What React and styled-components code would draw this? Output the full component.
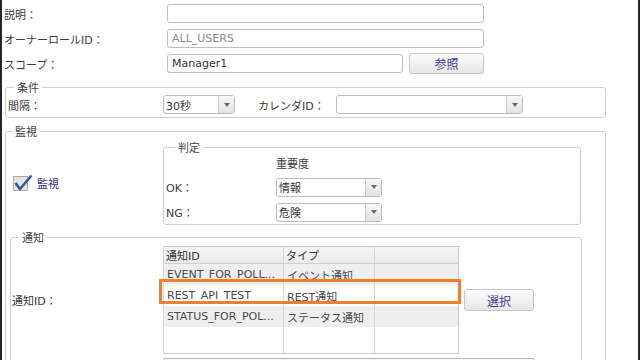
import React from 'react';
import styled, { createGlobalStyle } from 'styled-components';

const GlobalStyle = createGlobalStyle`
  html, body {
    margin: 0;
    padding: 0;
    background: #fff;
  }
  body {
    font-family: "DejaVu Sans", "Noto Sans CJK JP", sans-serif;
    font-size: 11px;
    color: #3a3a3a;
  }
`;

const Frame = styled.div`
  width: 640px;
  height: 360px;
  box-sizing: border-box;
  border-left: 2px solid #262626;
  border-right: 2px solid #262626;
  overflow: hidden;
  background: #fff;
`;

const TopForm = styled.div`
  display: flex;
  flex-direction: column;
  gap: 6px;
  padding: 4px 0 0 2px;
`;

const Row = styled.div`
  display: flex;
  align-items: center;
  height: ${p => p.$h || 19}px;
`;

const Label = styled.span`
  width: ${p => p.$w}px;
  flex-shrink: 0;
  white-space: nowrap;
  margin-left: ${p => p.$ml || 0}px;
`;

const TextBox = styled.div`
  width: ${p => p.$w}px;
  height: 19px;
  box-sizing: border-box;
  border: 1px solid #bcbcbc;
  border-radius: 3px;
  padding: 0 4px;
  display: flex;
  align-items: center;
  color: ${p => (p.$muted ? '#8a8a8a' : '#333')};
  background: #fff;
`;

const Button = styled.button`
  width: ${p => p.$w}px;
  height: ${p => p.$h || 21}px;
  margin-left: 6px;
  flex-shrink: 0;
  border: 1px solid #c6c6c6;
  border-radius: 3px;
  background: linear-gradient(#fdfdfd, #e6e6e6);
  color: #3b3b9c;
  font-family: "Noto Sans CJK JP", sans-serif;
  font-size: 12px;
  padding: 0;
`;

const SelectBox = styled.div`
  width: ${p => p.$w}px;
  height: ${p => p.$h || 19}px;
  box-sizing: border-box;
  border: 1px solid #bcbcbc;
  border-radius: 3px;
  display: flex;
  background: #fff;
  flex-shrink: 0;
`;

const SelectValue = styled.span`
  flex: 1;
  display: flex;
  align-items: center;
  padding-left: 2px;
  color: #333;
`;

const SelectArrow = styled.span`
  width: 15px;
  border-left: 1px solid #cdcdcd;
  background: linear-gradient(#f7f7f7, #e3e3e3);
  display: flex;
  align-items: center;
  justify-content: center;
  &::after {
    content: '';
    border-left: 3.5px solid transparent;
    border-right: 3.5px solid transparent;
    border-top: 4px solid #6a6a6a;
  }
`;

const Group = styled.fieldset`
  width: ${p => p.$w}px;
  box-sizing: border-box;
  margin: ${p => p.$m};
  padding: ${p => p.$p};
  border: 1px solid #cfcfcf;
  border-radius: 3px;
  min-width: 0;
`;

const Legend = styled.legend`
  padding: 0 3px;
  margin-left: ${p => p.$ml}px;
  line-height: 15px;
  font-family: "Noto Sans CJK JP", sans-serif;
  color: #444;
`;

const MonitorRow = styled.div`
  display: flex;
  align-items: center;
`;

const CheckColumn = styled.div`
  width: 157px;
  box-sizing: border-box;
  padding-left: 7px;
  display: flex;
  align-items: center;
  gap: 4px;
`;

const CheckText = styled.span`
  color: #34348f;
  font-family: "Noto Sans CJK JP", sans-serif;
  font-size: 11px;
`;

const JudgeGrid = styled.div`
  display: grid;
  grid-template-columns: 110px 106px;
  grid-template-rows: 16px 18px 18px;
  row-gap: 7px;
  align-items: center;
`;

const NotifyRow = styled.div`
  display: flex;
  align-items: center;
  margin-top: 1px;
`;

const TableWrap = styled.div`
  position: relative;
  width: 295px;
  flex-shrink: 0;
`;

const Table = styled.table`
  width: 295px;
  table-layout: fixed;
  border-collapse: collapse;
  border: 1px solid #c9c9c9;
`;

const HeadCell = styled.th`
  height: 16px;
  padding: 0 2px;
  text-align: left;
  font-weight: normal;
  color: #333;
  background: linear-gradient(#f7f7f7, #e9e9e9);
  border-left: 1px solid #d6d6d6;
  border-bottom: 1px solid #d0d0d0;
  white-space: nowrap;
  overflow: hidden;
`;

const Cell = styled.td`
  height: ${p => p.$h || 21}px;
  padding: 0 3px;
  color: #4a4a4a;
  background: ${p => (p.$alt ? '#efefef' : '#fff')};
  border-left: 1px solid #d6d6d6;
  white-space: nowrap;
  overflow: hidden;
`;

const Highlight = styled.div`
  position: absolute;
  left: -4px;
  top: 33px;
  width: 302px;
  height: 25px;
  box-sizing: border-box;
  border: 3px solid #ef7f2c;
  pointer-events: none;
`;

const NextBox = styled.div`
  margin: 4px 0 0 151px;
  width: 370px;
  height: 20px;
  border: 1px solid #b8b8b8;
  border-radius: 2px;
  background: linear-gradient(#f4f4f4, #ffffff);
`;

function Select({ w, value }) {
  return (
    <SelectBox $w={w}>
      <SelectValue>{value}</SelectValue>
      <SelectArrow />
    </SelectBox>
  );
}

function CheckIcon() {
  return (
    <svg width="20" height="18" viewBox="0 0 20 18">
      <rect x="0.5" y="2.5" width="14" height="14" fill="#e4e4e4" stroke="#ababab" />
      <path d="M2.5 9 L7 15 L18.5 1.5" fill="none" stroke="#2e5d9f" strokeWidth="2.6" />
    </svg>
  );
}

const rows = [
  { id: 'EVENT_FOR_POLL...', type: 'イベント通知', alt: true },
  { id: 'REST_API_TEST', type: 'REST通知', alt: false },
  { id: 'STATUS_FOR_POL...', type: 'ステータス通知', alt: true },
];

export default function App() {
  return (
    <Frame>
      <GlobalStyle />
      <TopForm>
        <Row>
          <Label $w={163}>説明：</Label>
          <TextBox $w={317} />
        </Row>
        <Row>
          <Label $w={163}>オーナーロールID：</Label>
          <TextBox $w={317} $muted>ALL_USERS</TextBox>
        </Row>
        <Row>
          <Label $w={163}>スコープ：</Label>
          <TextBox $w={236}>Manager1</TextBox>
          <Button $w={75}>参照</Button>
        </Row>
      </TopForm>

      <Group $w={601} $m="7px 0 0 3px" $p="0 0 3px 2px">
        <Legend $ml={6}>条件</Legend>
        <Row>
          <Label $w={155}>間隔：</Label>
          <Select w={72} value="30秒" />
          <Label $w={78} $ml={23}>カレンダID：</Label>
          <Select w={187} value="" />
        </Row>
      </Group>

      <Group $w={601} $m="6px 0 0 3px" $p="1px 23px 0 0">
        <Legend $ml={6}>監視</Legend>
        <MonitorRow>
          <CheckColumn>
            <CheckIcon />
            <CheckText>監視</CheckText>
          </CheckColumn>
          <Group $w={418} $m="0" $p="0 0 3px 2px">
            <Legend $ml={9}>判定</Legend>
            <JudgeGrid>
              <span />
              <span>重要度</span>
              <span>OK：</span>
              <Select w={106} value="情報" />
              <span>NG：</span>
              <Select w={106} value="危険" />
            </JudgeGrid>
          </Group>
        </MonitorRow>

        <Group $w={572} $m="5px 0 0 4px" $p="0 0 0 1px">
          <Legend $ml={7}>通知</Legend>
          <NotifyRow>
            <Label $w={151}>通知ID：</Label>
            <TableWrap>
              <Table>
                <colgroup>
                  <col style={{ width: 120 }} />
                  <col style={{ width: 91 }} />
                  <col style={{ width: 84 }} />
                </colgroup>
                <thead>
                  <tr>
                    <HeadCell>通知ID</HeadCell>
                    <HeadCell>タイプ</HeadCell>
                    <HeadCell />
                  </tr>
                </thead>
                <tbody>
                  {rows.map(r => (
                    <tr key={r.id}>
                      <Cell $alt={r.alt}>{r.id}</Cell>
                      <Cell $alt={r.alt}>{r.type}</Cell>
                      <Cell $alt={r.alt} />
                    </tr>
                  ))}
                  <tr>
                    <Cell $h={26} />
                    <Cell $h={26} />
                    <Cell $h={26} />
                  </tr>
                </tbody>
              </Table>
              <Highlight />
            </TableWrap>
            <Button $w={70} $h={22}>選択</Button>
          </NotifyRow>
          <NextBox />
        </Group>
      </Group>
    </Frame>
  );
}
